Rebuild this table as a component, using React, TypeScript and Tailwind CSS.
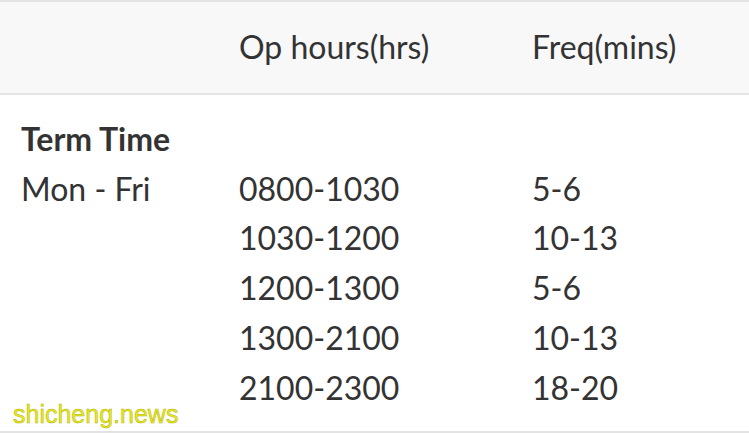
import React from "react";

const rows = [
  ["Mon - Fri", "0800-1030", "5-6"],
  ["", "1030-1200", "10-13"],
  ["", "1200-1300", "5-6"],
  ["", "1300-2100", "10-13"],
  ["", "2100-2300", "18-20"],
];

export default function App() {
  return (
    <div
      className="relative w-[749px] h-[433px] bg-white overflow-hidden text-[#333333]"
      style={{ fontFamily: "Lato, 'Open Sans', sans-serif" }}
    >
      <div className="border-t-2 border-b-2 border-[#e3e3e3] bg-[#f8f8f8] h-[95px] grid grid-cols-[239px_293px_1fr] items-center text-[32px] leading-none">
        <div className="pl-[21px]"></div>
        <div className="pb-[2px]">Op hours(hrs)</div>
        <div className="pb-[2px]">Freq(mins)</div>
      </div>
      <div className="pt-[19px] text-[32px] leading-[49.7px]">
        <div className="pl-[21px] font-bold">Term Time</div>
        {rows.map((r, i) => (
          <div key={i} className="grid grid-cols-[239px_293px_1fr]">
            <div className="pl-[21px]">{r[0]}</div>
            <div>{r[1]}</div>
            <div>{r[2]}</div>
          </div>
        ))}
      </div>
      <div className="absolute left-0 right-0 bottom-0 h-[2px] bg-[#e3e3e3]"></div>
      <div
        className="absolute left-[13px] top-[402px] text-[25px] leading-none text-[#e8e826]"
        style={{
          fontFamily: "'Liberation Sans', Arial, sans-serif",
          WebkitTextStroke: "0.5px #b5b500",
        }}
      >
        shicheng.news
      </div>
    </div>
  );
}
